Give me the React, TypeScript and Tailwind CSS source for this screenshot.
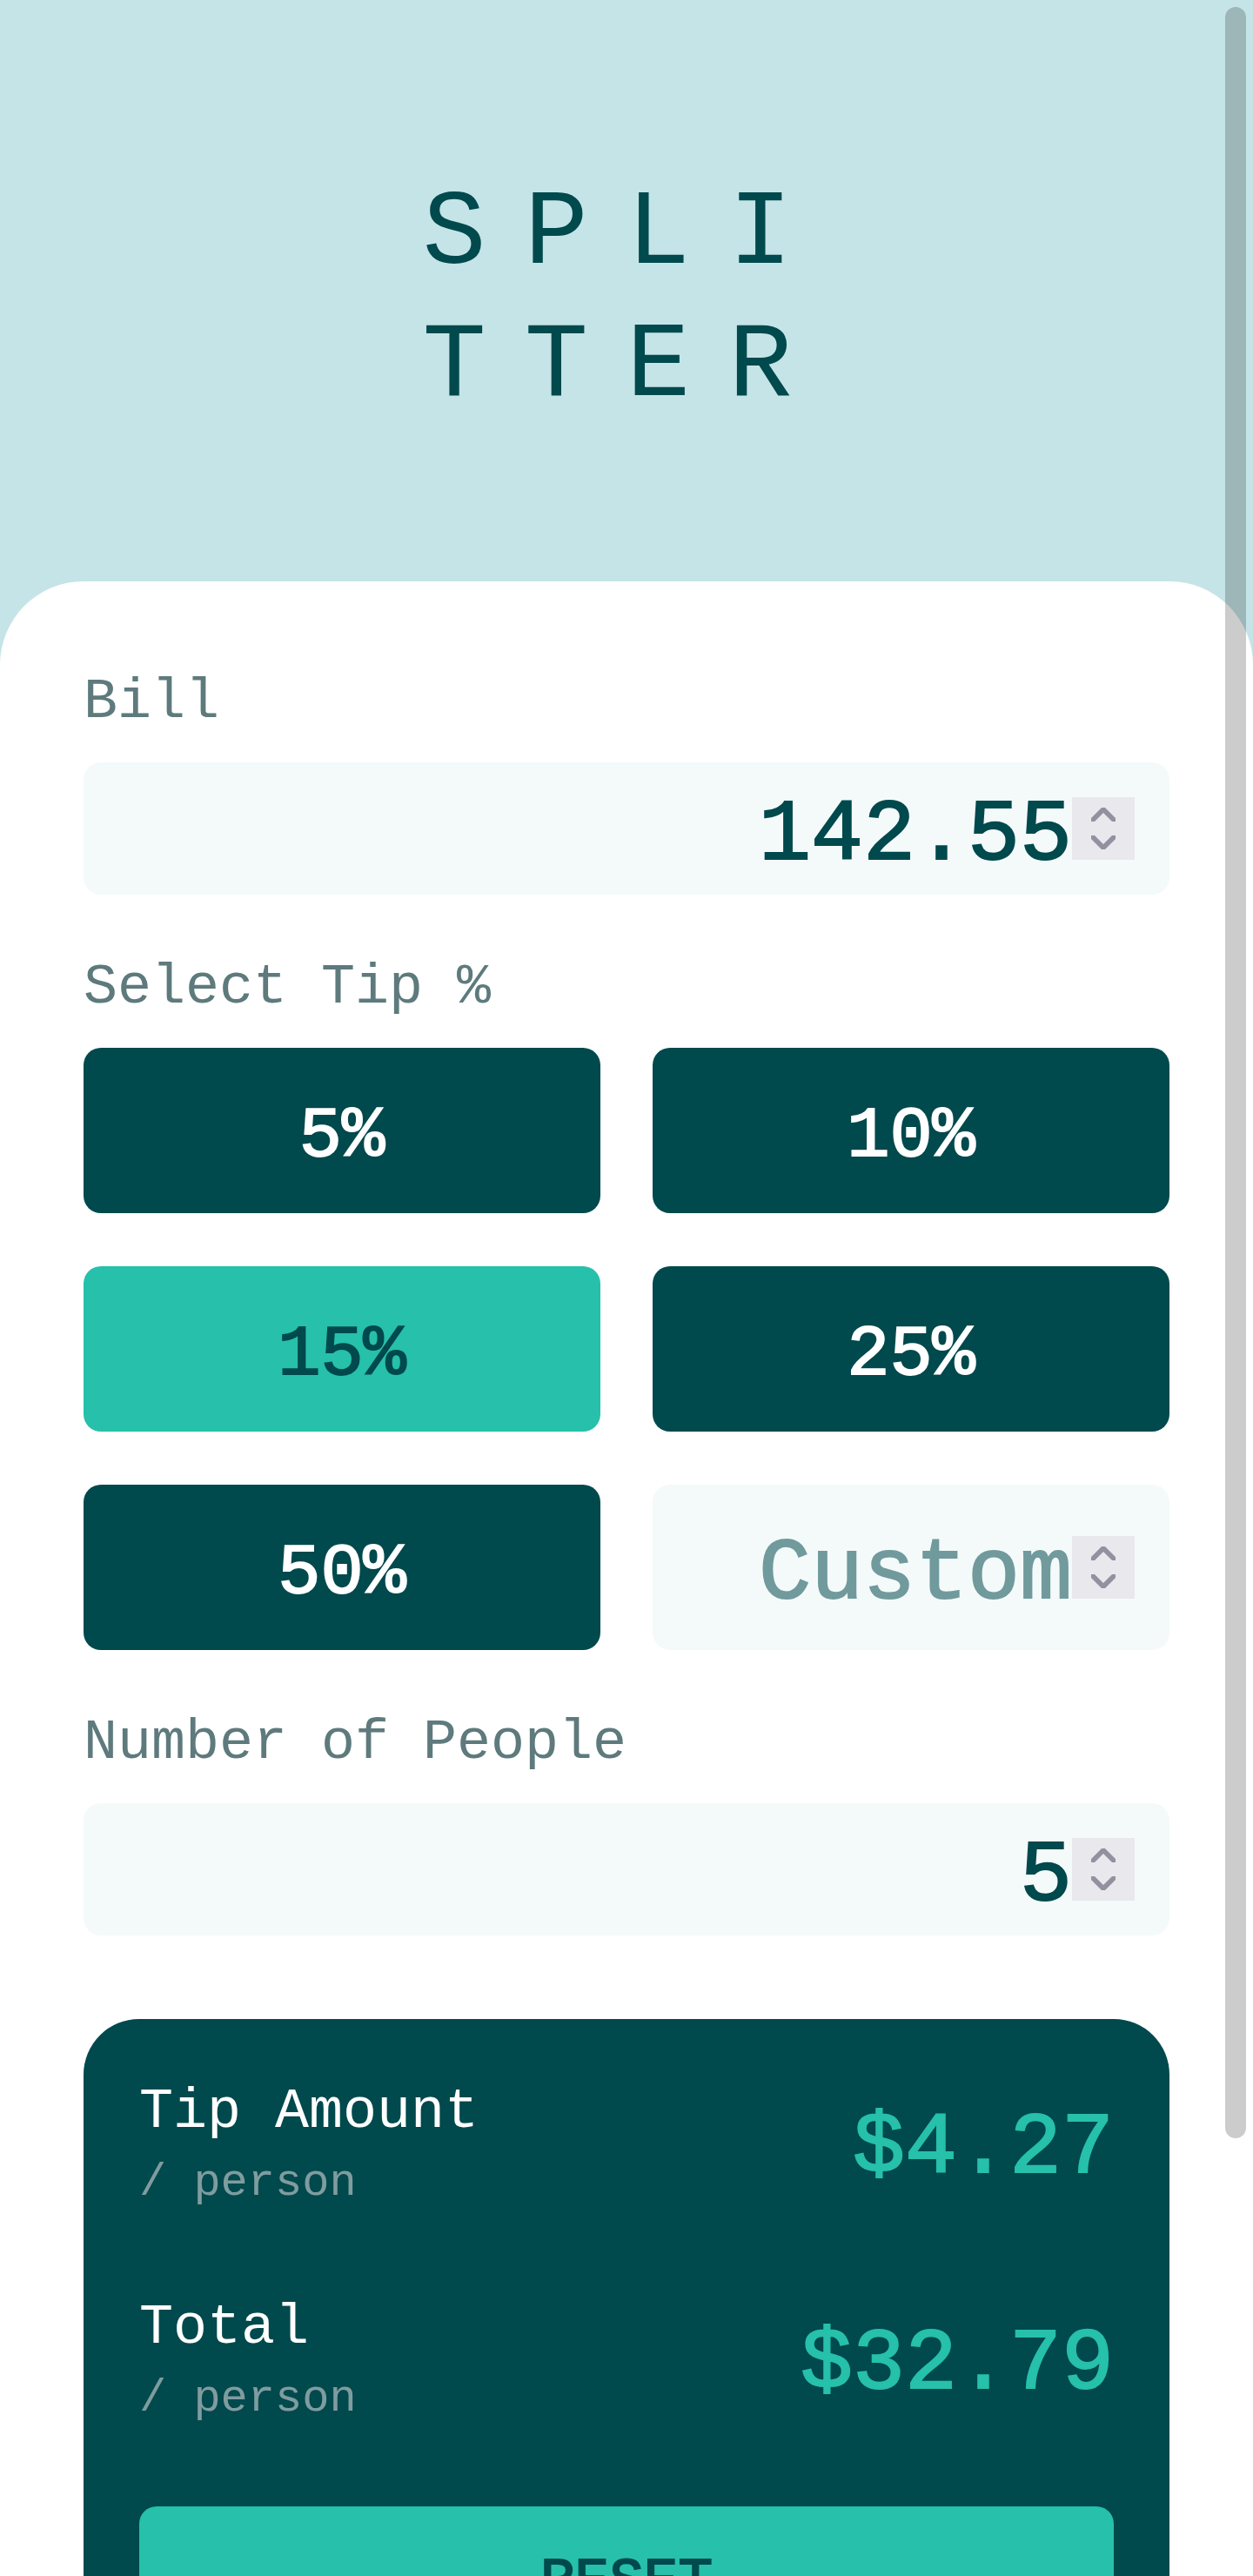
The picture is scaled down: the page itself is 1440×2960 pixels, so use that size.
import { useState } from "react";

const TIPS = [5, 10, 15, 25, 50];

type NumberFieldProps = {
  id: string;
  value: string;
  onChange: (value: string) => void;
  placeholder?: string;
  label?: string;
  className?: string;
};

function NumberField({ id, value, onChange, placeholder, label, className = "" }: NumberFieldProps) {
  const step = (delta: number) =>
    onChange(String(Math.max(0, Math.round((Number(value) + delta) * 100) / 100)));

  return (
    <div className={`flex min-w-0 items-center rounded-[20px] bg-[#f4fafa] px-10 ${className}`}>
      <input
        id={id}
        type="number"
        aria-label={label}
        value={value}
        placeholder={placeholder}
        onChange={(e) => onChange(e.target.value)}
        className="h-full min-w-0 flex-1 appearance-none bg-transparent pt-4 text-right text-[100px] text-[#00494d] outline-none [-moz-appearance:textfield] [-webkit-text-stroke:2px_currentColor] placeholder:text-[#719a9d] placeholder:opacity-100 [&::-webkit-inner-spin-button]:appearance-none"
      />
      <div className="flex size-[72px] shrink-0 flex-col bg-[#e9e8ed] text-[#9391a0]">
        <button
          type="button"
          aria-label="Increase"
          onClick={() => step(1)}
          className="flex flex-1 items-end justify-center pb-2"
        >
          <svg width="28" height="16" viewBox="0 0 28 16" fill="currentColor" aria-hidden="true">
            <path d="M0 16v-4L12 0h4l12 12v4h-4L14 6 4 16z" />
          </svg>
        </button>
        <button
          type="button"
          aria-label="Decrease"
          onClick={() => step(-1)}
          className="flex flex-1 items-start justify-center pt-2"
        >
          <svg width="28" height="16" viewBox="0 0 28 16" fill="currentColor" aria-hidden="true">
            <path d="M0 0v4l12 12h4L28 4V0h-4L14 10 4 0z" />
          </svg>
        </button>
      </div>
    </div>
  );
}

function ResultRow({ title, amount }: { title: string; amount: number }) {
  return (
    <div className="flex items-center justify-between">
      <div>
        <p className="text-[65px] leading-[86px] text-white">{title}</p>
        <p className="text-[52px] leading-[78px] text-[#7f9c9f]">/ person</p>
      </div>
      <output className="pt-2 text-[100px] leading-none text-[#26c0ab] [-webkit-text-stroke:2px_currentColor]">
        ${amount.toFixed(2)}
      </output>
    </div>
  );
}

export default function App() {
  const [bill, setBill] = useState("142.55");
  const [tip, setTip] = useState(15);
  const [custom, setCustom] = useState("");
  const [people, setPeople] = useState("5");

  const percent = custom === "" ? tip : Number(custom);
  const count = Math.max(1, Number(people));
  const tipEach = Math.floor((Number(bill) * percent) / count) / 100;
  const totalEach = Math.round((Number(bill) * (100 + percent)) / count) / 100;

  const reset = () => {
    setBill("");
    setTip(0);
    setCustom("");
    setPeople("");
  };

  return (
    <div className="relative h-screen overflow-hidden bg-[#c5e4e7] font-['Liberation_Mono',monospace]">
      <div className="h-full overflow-y-auto [scrollbar-width:none]">
        <header className="pt-[194px] pb-[170px]">
          <h1 className="text-center text-[122px] leading-[152px] tracking-[44px] text-[#00494d]">
            SPLI
            <br />
            TTER
          </h1>
        </header>

        <main className="rounded-t-[96px] bg-white p-24">
          <label htmlFor="bill" className="block text-[65px] leading-[86px] text-[#5e7a7d]">
            Bill
          </label>
          <NumberField id="bill" value={bill} onChange={setBill} className="mt-[26px] h-[152px]" />

          <h2 className="mt-16 text-[65px] leading-[86px] text-[#5e7a7d]">Select Tip %</h2>
          <div className="mt-[26px] grid auto-rows-[190px] grid-cols-2 gap-x-[60px] gap-y-[61px]">
            {TIPS.map((value) => (
              <button
                key={value}
                type="button"
                aria-pressed={value === tip}
                onClick={() => setTip(value)}
                className={`rounded-[20px] pt-4 text-[82px] leading-none [-webkit-text-stroke:2px_currentColor] ${
                  value === tip ? "bg-[#26c0ab] text-[#00494d]" : "bg-[#00494d] text-white"
                }`}
              >
                {value}%
              </button>
            ))}
            <NumberField
              id="custom"
              label="Custom tip"
              placeholder="Custom"
              value={custom}
              onChange={setCustom}
            />
          </div>

          <label htmlFor="people" className="mt-16 block text-[65px] leading-[86px] text-[#5e7a7d]">
            Number of People
          </label>
          <NumberField
            id="people"
            value={people}
            onChange={setPeople}
            className="mt-[26px] h-[152px]"
          />

          <section className="mt-24 flex flex-col gap-[84px] rounded-[64px] bg-[#00494d] p-16">
            <ResultRow title="Tip Amount" amount={tipEach} />
            <ResultRow title="Total" amount={totalEach} />
            <button
              type="button"
              onClick={reset}
              className="h-44 rounded-[20px] bg-[#26c0ab] text-[66px] leading-none text-[#00494d] [-webkit-text-stroke:2px_currentColor]"
            >
              RESET
            </button>
          </section>
        </main>
      </div>
      <div
        aria-hidden="true"
        className="pointer-events-none absolute top-2 right-2 bottom-[17%] w-6 rounded-full bg-black/20"
      />
    </div>
  );
}
